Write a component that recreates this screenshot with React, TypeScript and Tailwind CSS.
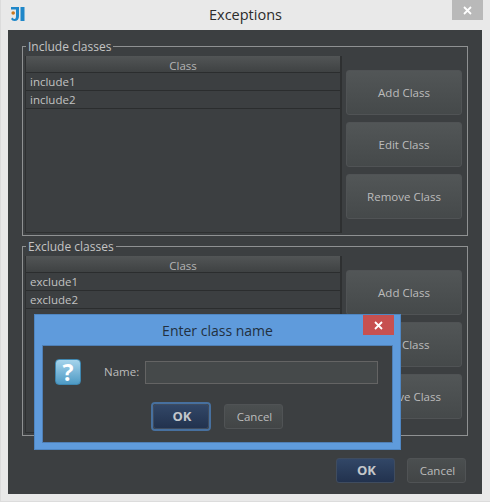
function Close({ className }: { className: string }) {
  return (
    <div className={`flex items-center justify-center h-[20px] w-[31px] ${className}`}>
      <svg width="9" height="9" viewBox="0 0 9 9" fill="none" stroke="#ffffff" strokeWidth="1.8">
        <path d="M1 1 L8 8 M8 1 L1 8" />
      </svg>
    </div>
  );
}

function Btn({ children }: { children: React.ReactNode }) {
  return (
    <div className="w-[116px] h-[45px] flex items-center justify-center rounded-[3px] border border-[#505355] bg-gradient-to-b from-[#525657] to-[#45494a] text-[#bcbcbc] text-[11.5px]">
      {children}
    </div>
  );
}

function SmallBtn({ primary, w, children }: { primary?: boolean; w: string; children: React.ReactNode }) {
  return (
    <div
      className={`${w} h-[25px] pl-[2px] flex items-center justify-center rounded-[3px] ${
        primary
          ? "border border-[#3f4c5f] bg-gradient-to-b from-[#324767] to-[#22324e] text-[#c4c7ca] font-bold text-[13px]"
          : "border border-[#505355] bg-gradient-to-b from-[#4b4f50] to-[#424546] text-[#bcbcbc] text-[11.5px]"
      }`}
    >
      {children}
    </div>
  );
}

function Group({ title, rows }: { title: string; rows: string[] }) {
  return (
    <fieldset className="w-[446px] h-[198px] border border-[#8f9192] pl-[2px] pr-[4px] pb-[2px] flex">
      <legend className="ml-[1px] px-[2px] h-[16px] leading-[18px] text-[12px] text-[#c4c4c4]">{title}</legend>
      <div className="flex w-full pt-[2px]">
        <div className="w-[317px] h-[177px] border-r-2 border-b border-l border-[#2e3031] flex flex-col">
          <div className="h-[16px] pt-[3px] shrink-0 flex items-center justify-center bg-gradient-to-b from-[#525556] to-[#3f4243] text-[#b4b4b4] text-[11.5px]">
            Class
          </div>
          {rows.map((r) => (
            <div key={r} className="h-[18px] shrink-0 flex items-center pl-[4px] border-t border-[#2b2d2e] text-[#c2c2c2] text-[11.5px]">
              {r}
            </div>
          ))}
          <div className="border-t border-[#2b2d2e]" />
        </div>
        <div className="ml-[4px] pt-[14px] flex flex-col gap-[7px]">
          <Btn>Add Class</Btn>
          <Btn>Edit Class</Btn>
          <Btn>Remove Class</Btn>
        </div>
      </div>
    </fieldset>
  );
}

export default function App() {
  return (
    <div
      className="relative w-[490px] h-[502px] bg-[#e9e9e9] border-l border-b border-[#dcdcdc] flex flex-col overflow-hidden"
      style={{ fontFamily: '"Open Sans", "Noto Sans", sans-serif' }}
    >
      <div className="relative h-[30px] shrink-0 flex items-center justify-center text-[#2b2b2b] text-[14.5px]">
        <svg className="absolute left-[10px] top-[7px]" width="14" height="14" viewBox="0 0 14 14">
          <rect x="9.5" y="0" width="4" height="14" fill="#1f87c9" />
          <path d="M0 0 H8 V9 Q8 14 3.5 14 Q1 14 0 12 L1.5 10.5 Q2.5 12 3.5 12 Q5 12 5 9 V2.5 H0 Z" fill="#1f87c9" />
          <circle cx="2.2" cy="6" r="1.8" fill="#c9781f" />
        </svg>
        <span>Exceptions</span>
        <Close className="absolute right-[7px] top-0 bg-[#b9b9b9]" />
      </div>
      <div className="ml-[7px] mr-[8px] h-[464px] bg-[#3c3f41] flex flex-col pl-[14px] pt-[8px]">
        <Group title="Include classes" rows={["include1", "include2"]} />
        <div className="mt-[2px]">
          <Group title="Exclude classes" rows={["exclude1", "exclude2"]} />
        </div>
        <div className="mt-[22px] flex gap-[12px] pl-[314px]">
          <SmallBtn primary w="w-[59px]">OK</SmallBtn>
          <SmallBtn w="w-[59px]">Cancel</SmallBtn>
        </div>
      </div>

      <div className="absolute left-[33px] top-[314px] w-[367px] h-[136px] bg-[#5f9bdc] border border-[#4f86c2] flex flex-col">
        <div className="relative h-[30px] shrink-0 flex items-center justify-center text-[#22303f] text-[14px]">
          <span>Enter class name</span>
          <Close className="absolute right-[6px] top-0 bg-[#c75050]" />
        </div>
        <div className="mx-[7px] h-[98px] bg-[#3c3f41] border border-[#4f7fb5] flex flex-col">
          <div className="flex items-center pt-[13px] pl-[12px]">
            <div className="w-[26px] h-[26px] rounded-[4px] bg-gradient-to-b from-[#a5d4ec] to-[#4d9ac4] border border-[#3f87b0] flex items-center justify-center text-white text-[23px] font-bold leading-none">
              ?
            </div>
            <span className="ml-[23px] w-[41px] text-[11.5px] text-[#bcbcbc]">Name:</span>
            <div className="w-[233px] h-[23px] bg-[#45494a] border border-[#646464]" />
          </div>
          <div className="flex items-center gap-[13px] pl-[108px] mt-[17px]">
            <div className="rounded-[4px] border-2 border-[#47709f]">
              <SmallBtn primary w="w-[56px]">OK</SmallBtn>
            </div>
            <SmallBtn w="w-[59px]">Cancel</SmallBtn>
          </div>
        </div>
      </div>
    </div>
  );
}
